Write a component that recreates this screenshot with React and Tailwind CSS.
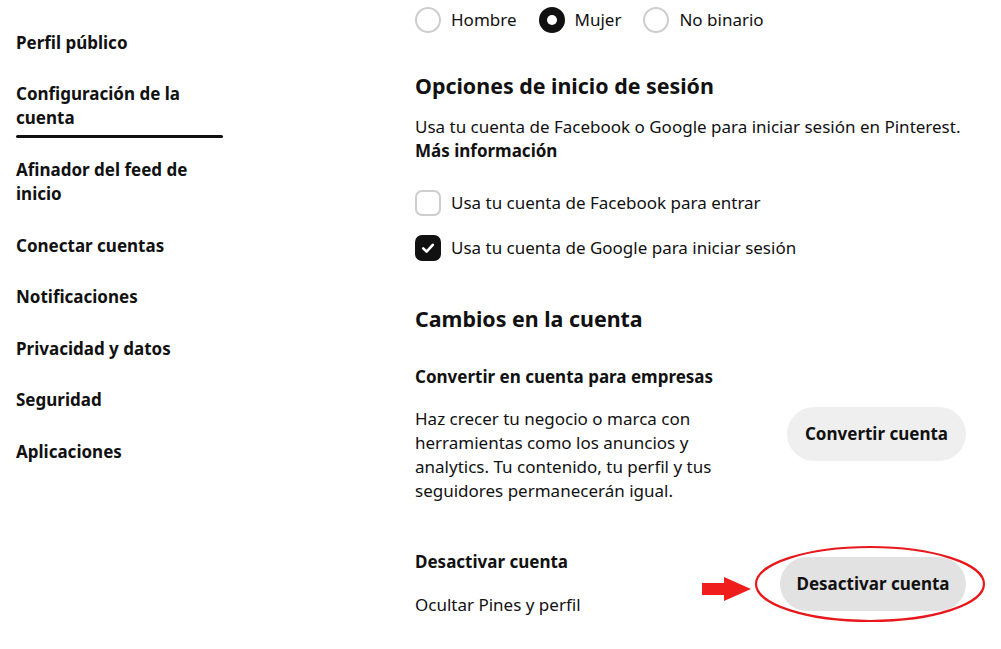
import React from "react";

const font = { fontFamily: '"Noto Sans", "Open Sans", sans-serif' };

function Radio({ checked, label }) {
  return (
    <div className="flex items-center gap-[10px]">
      {checked ? (
        <div className="w-[26px] h-[26px] rounded-full bg-[#111] flex items-center justify-center">
          <div className="w-[10px] h-[10px] rounded-full bg-white" />
        </div>
      ) : (
        <div className="w-[26px] h-[26px] rounded-full border-2 border-[#cdcdcd] bg-white" />
      )}
      <span className="text-[17px] leading-[28px] text-[#111]">{label}</span>
    </div>
  );
}

function Checkbox({ checked, label }) {
  return (
    <div className="flex items-center gap-[10px] h-[26px]">
      {checked ? (
        <div className="w-[26px] h-[26px] rounded-[7px] bg-[#111] flex items-center justify-center">
          <svg width="16" height="16" viewBox="0 0 16 16">
            <path d="M3.2 8.4 L6.6 11.6 L12.8 4.8" fill="none" stroke="white" strokeWidth="2.6" strokeLinecap="round" strokeLinejoin="round" />
          </svg>
        </div>
      ) : (
        <div className="w-[26px] h-[26px] rounded-[7px] border-2 border-[#cdcdcd] bg-white" />
      )}
      <span className="text-[17px] leading-[24px] text-[#111]">{label}</span>
    </div>
  );
}

const navItems = [
  { label: "Perfil público", mt: "mt-[31px]" },
  { label: ["Configuración de la", "cuenta"], mt: "mt-[27px]", active: true },
  { label: ["Afinador del feed de", "inicio"], mt: "mt-[20px]" },
  { label: "Conectar cuentas", mt: "mt-[28px]" },
  { label: "Notificaciones", mt: "mt-[27px]" },
  { label: "Privacidad y datos", mt: "mt-[28px]" },
  { label: "Seguridad", mt: "mt-[27px]" },
  { label: "Aplicaciones", mt: "mt-[28px]" },
];

export default function App() {
  return (
    <div className="w-[1001px] h-[649px] bg-white overflow-hidden flex text-[#111]" style={font}>
      <aside className="w-[223px] pl-4 flex flex-col shrink-0">
        {navItems.map((it, i) => (
          <div key={i} className={it.mt}>
            <div className="text-[17px] leading-[24px] font-bold">
              {Array.isArray(it.label) ? (
                <>
                  {it.label[0]}
                  <br />
                  {it.label[1]}
                </>
              ) : (
                it.label
              )}
            </div>
            {it.active && <div className="mt-[5px] h-[3px] bg-[#111] rounded-full" />}
          </div>
        ))}
      </aside>

      <main className="ml-[192px] w-[551px] flex flex-col">
        <div className="mt-[6px] flex items-center gap-[22px]">
          <Radio label="Hombre" />
          <Radio checked label="Mujer" />
          <Radio label="No binario" />
        </div>

        <h2 className="mt-[38px] text-[21.4px] leading-[28px] font-bold">Opciones de inicio de sesión</h2>
        <p className="mt-[15px] text-[17px] leading-[24px]">
          Usa tu cuenta de Facebook o Google para iniciar sesión en Pinterest.
          <br />
          <span className="font-bold">Más información</span>
        </p>

        <div className="mt-[27px] flex flex-col gap-[19px]">
          <Checkbox label="Usa tu cuenta de Facebook para entrar" />
          <Checkbox checked label="Usa tu cuenta de Google para iniciar sesión" />
        </div>

        <h2 className="mt-[44px] text-[21.4px] leading-[28px] font-bold">Cambios en la cuenta</h2>

        <h3 className="mt-[32px] text-[17px] leading-[24px] font-bold">Convertir en cuenta para empresas</h3>
        <div className="mt-[18px] flex items-start justify-between">
          <p className="text-[17px] leading-[24px]">
            Haz crecer tu negocio o marca con
            <br />
            herramientas como los anuncios y
            <br />
            analytics. Tu contenido, tu perfil y tus
            <br />
            seguidores permanecerán igual.
          </p>
          <button className="w-[179px] h-[54px] rounded-full bg-[#efefef] text-[17px] font-bold text-[#111]">
            Convertir cuenta
          </button>
        </div>

        <div className="mt-[47px] flex items-center justify-between">
          <div className="flex flex-col">
            <h3 className="text-[17px] leading-[24px] font-bold">Desactivar cuenta</h3>
            <p className="mt-[19px] text-[17px] leading-[24px]">Ocultar Pines y perfil</p>
          </div>
          <div className="relative flex items-center">
            <svg className="absolute left-[-78px] top-[20px]" width="50" height="25" viewBox="0 0 50 25">
              <polygon points="0,6 22,6 22,0 49,12 22,24 22,18 0,18" fill="#f01d1d" />
            </svg>
            <svg className="absolute left-[-26px] top-[-12px]" width="232" height="78" viewBox="0 0 232 78">
              <ellipse cx="116" cy="39" rx="114" ry="37" fill="none" stroke="#e8171b" strokeWidth="2.2" />
            </svg>
            <button className="w-[186px] h-[54px] rounded-full bg-[#e2e2e2] text-[17px] font-bold text-[#111]">
              Desactivar cuenta
            </button>
          </div>
        </div>
      </main>
    </div>
  );
}
